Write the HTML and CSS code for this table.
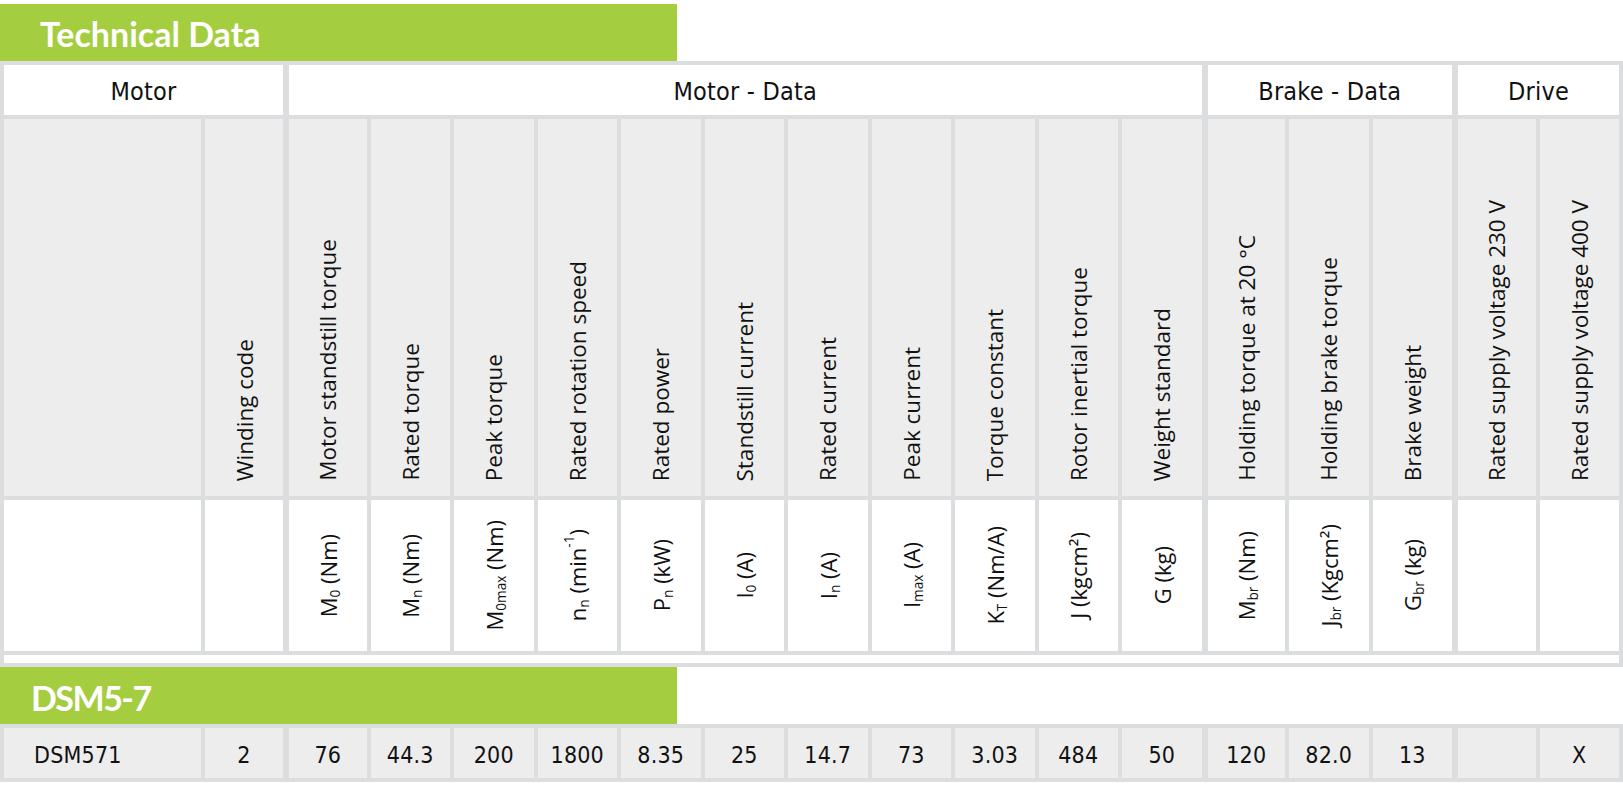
FILE: index.html
```html
<!DOCTYPE html>
<html lang="en">
<head>
<meta charset="utf-8">
<title>Technical Data</title>
<link rel="stylesheet" href="styles.css">
</head>
<body>
<div class="page">
  <div class="band band-title">Technical Data</div>

  <div class="grid spec">
    <div class="hd span2">Motor</div>
    <div class="hd span11 g">Motor - Data</div>
    <div class="hd span3 g">Brake - Data</div>
    <div class="hd span2 g">Drive</div>

    <div class="lab"></div>
    <div class="lab"><span class="rot">Winding code</span></div>
    <div class="lab g"><span class="rot">Motor standstill torque</span></div>
    <div class="lab"><span class="rot">Rated torque</span></div>
    <div class="lab"><span class="rot">Peak torque</span></div>
    <div class="lab"><span class="rot">Rated rotation speed</span></div>
    <div class="lab"><span class="rot">Rated power</span></div>
    <div class="lab"><span class="rot">Standstill current</span></div>
    <div class="lab"><span class="rot">Rated current</span></div>
    <div class="lab"><span class="rot">Peak current</span></div>
    <div class="lab"><span class="rot">Torque constant</span></div>
    <div class="lab"><span class="rot">Rotor inertial torque</span></div>
    <div class="lab"><span class="rot">Weight standard</span></div>
    <div class="lab g"><span class="rot">Holding torque at 20 °C</span></div>
    <div class="lab"><span class="rot">Holding brake torque</span></div>
    <div class="lab"><span class="rot">Brake weight</span></div>
    <div class="lab g"><span class="rot">Rated supply voltage 230 V</span></div>
    <div class="lab"><span class="rot">Rated supply voltage 400 V</span></div>

    <div class="sym"></div>
    <div class="sym"></div>
    <div class="sym g"><span class="rot">M<sub>0</sub> (Nm)</span></div>
    <div class="sym"><span class="rot">M<sub>n</sub> (Nm)</span></div>
    <div class="sym"><span class="rot">M<sub>0max</sub> (Nm)</span></div>
    <div class="sym"><span class="rot">n<sub>n</sub> (min<sup>-1</sup>)</span></div>
    <div class="sym"><span class="rot">P<sub>n</sub> (kW)</span></div>
    <div class="sym"><span class="rot">I<sub>0</sub> (A)</span></div>
    <div class="sym"><span class="rot">I<sub>n</sub> (A)</span></div>
    <div class="sym"><span class="rot">I<sub>max</sub> (A)</span></div>
    <div class="sym"><span class="rot">K<sub>T</sub> (Nm/A)</span></div>
    <div class="sym"><span class="rot">J (kgcm²)</span></div>
    <div class="sym"><span class="rot">G (kg)</span></div>
    <div class="sym g"><span class="rot">M<sub>br</sub> (Nm)</span></div>
    <div class="sym"><span class="rot">J<sub>br</sub> (Kgcm²)</span></div>
    <div class="sym"><span class="rot">G<sub>br</sub> (kg)</span></div>
    <div class="sym g"></div>
    <div class="sym"></div>

    <div class="spacer"></div>
  </div>

  <div class="band band-model">DSM5-7</div>

  <div class="grid data">
    <div class="val name">DSM571</div>
    <div class="val">2</div>
    <div class="val g">76</div>
    <div class="val">44.3</div>
    <div class="val">200</div>
    <div class="val">1800</div>
    <div class="val">8.35</div>
    <div class="val">25</div>
    <div class="val">14.7</div>
    <div class="val">73</div>
    <div class="val">3.03</div>
    <div class="val">484</div>
    <div class="val">50</div>
    <div class="val g">120</div>
    <div class="val">82.0</div>
    <div class="val">13</div>
    <div class="val g"></div>
    <div class="val">X</div>
  </div>
</div>
</body>
</html>
```

FILE: styles.css
```css
html, body {
  margin: 0;
  padding: 0;
  background: #ffffff;
}

.page {
  width: 1623px;
  padding-top: 4px;
  color: #111111;
  font-family: "DejaVu Sans Condensed", "Liberation Sans Narrow", Roboto, sans-serif;
}

.band {
  width: 677px;
  height: 57px;
  box-sizing: border-box;
  background: #a5cd40;
  color: #ffffff;
  font-family: Lato, "Open Sans", sans-serif;
  font-weight: 700;
  font-size: 34px;
  display: flex;
  align-items: center;
}

.band-title {
  padding-left: 40px;
  padding-top: 2px;
}

.band-model {
  padding-left: 31px;
  padding-top: 3px;
  letter-spacing: -1.5px;
}

.grid {
  display: grid;
  grid-template-columns: 197px 78px repeat(16, 1fr);
  gap: 4px;
  padding: 4px;
  box-sizing: border-box;
  width: 1623px;
  background: #dcdddf;
}

.spec {
  grid-template-rows: 50px 377px 151px 8px;
}

.data {
  grid-template-rows: 50px;
}

.g {
  margin-left: 2px;
}

.span2 { grid-column: span 2; }
.span3 { grid-column: span 3; }
.span11 { grid-column: span 11; }

.hd {
  background: #ffffff;
  display: flex;
  align-items: center;
  justify-content: center;
  padding-top: 3px;
  font-size: 25px;
  letter-spacing: 0.2px;
}

.lab {
  background: #ededed;
  display: flex;
  flex-direction: column;
  justify-content: flex-end;
  align-items: center;
  padding-bottom: 15px;
  font-family: "Open Sans", sans-serif;
  font-size: 22.5px;
}

.sym {
  background: #ffffff;
  display: flex;
  flex-direction: column;
  justify-content: center;
  align-items: center;
  font-family: "Open Sans", sans-serif;
  font-size: 22px;
}

.rot {
  writing-mode: vertical-rl;
  transform: rotate(180deg);
  white-space: nowrap;
  line-height: 1.2;
}

.rot sub {
  font-size: 0.62em;
  line-height: 0;
  vertical-align: -0.5em;
}

.rot sup {
  font-size: 0.62em;
  line-height: 0;
  vertical-align: 0.6em;
}

.spacer {
  grid-column: 1 / -1;
  background: #ffffff;
}

.val {
  background: #ededed;
  display: flex;
  align-items: center;
  justify-content: center;
  padding-top: 3px;
  font-size: 23px;
  letter-spacing: 0.2px;
}

.val.name {
  justify-content: flex-start;
  padding-left: 30px;
}
```
